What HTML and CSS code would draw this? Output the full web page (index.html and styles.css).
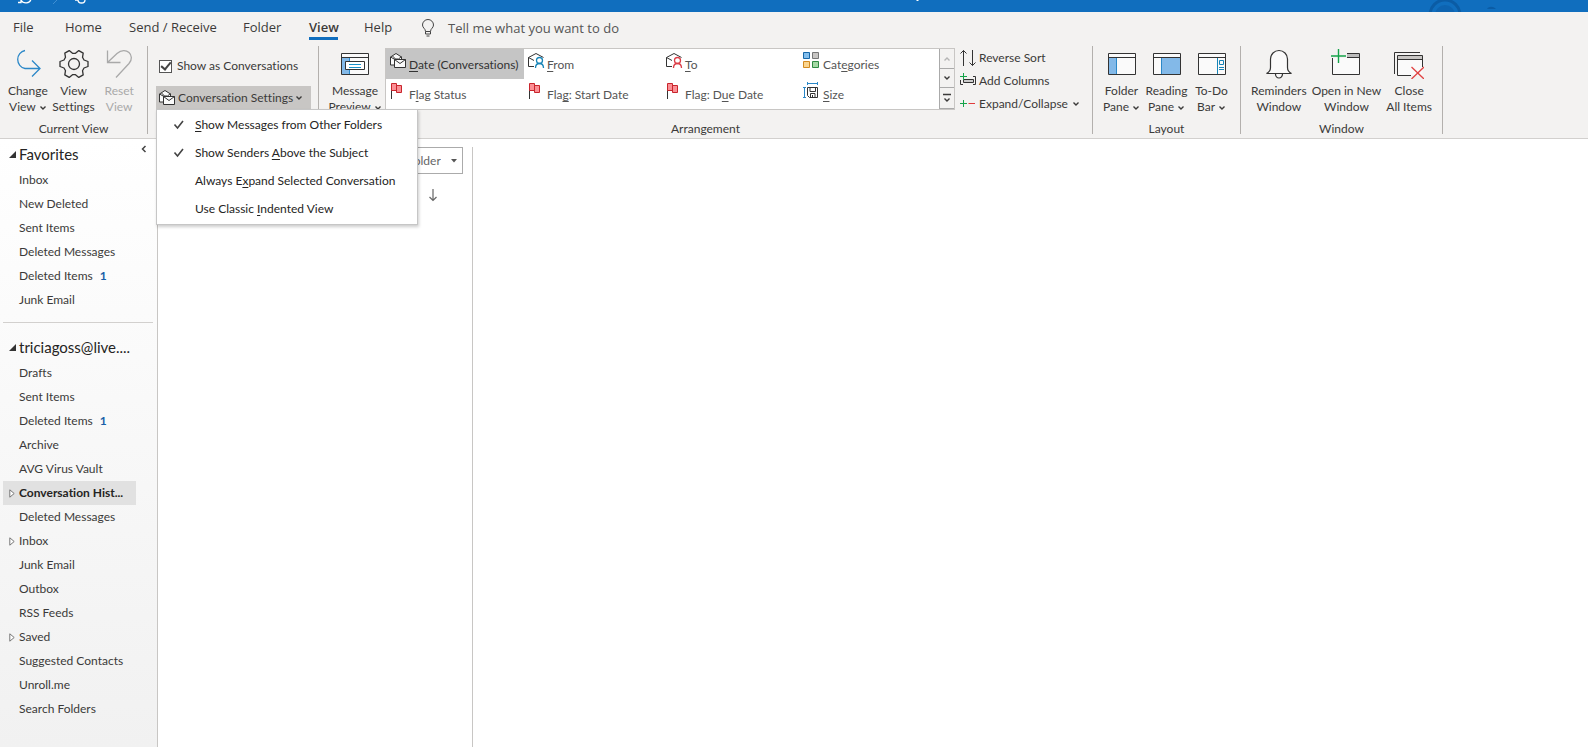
FILE: index.html
```
<!DOCTYPE html>
<html lang="en">
<head>
<meta charset="utf-8">
<title>Mail – View</title>
<link rel="stylesheet" href="styles.css">
</head>
<body>
<svg class="defs" aria-hidden="true">
  <symbol id="chev" viewBox="0 0 8 8"><path d="M1.500 2.500 4 5l2.500-2.500" fill="none" stroke="currentColor" stroke-width="1.400"/></symbol>
  <symbol id="mails" viewBox="0 0 18 18">
    <path d="M5 13H1.500V5L7 1.500 12.500 5v2" fill="#fafafa" stroke="#333"/>
    <path d="M1.500 5 6 7.500M3.500 4l3 3h3l3-2.500" fill="none" stroke="#333"/>
    <path d="M5.500 7.500h11v8h-11z" fill="#fafafa" stroke="#333"/><path d="m5.500 7.500 5.500 4 5.500-4" fill="none" stroke="#333"/>
  </symbol>
  <symbol id="person-mail" viewBox="0 0 18 18">
    <path d="M7 14.500H1.500V5.500L9 1.500l7.500 4M1.500 5.500 7 8.500" fill="none" stroke="#333"/>
    <circle cx="12.500" cy="8.500" r="3" fill="#fff" stroke="currentColor" stroke-width="1.300"/><path d="M8.500 16c0-6 8-6 8 0" fill="none" stroke="currentColor" stroke-width="1.300"/>
  </symbol>
  <symbol id="flag" viewBox="0 0 18 18">
    <path d="M2.500 2v15" stroke="#333"/><path d="M2.500 1.500h5v7h-5z" fill="#fb8f95" stroke="#c8252c"/><path d="M7.500 3.500h5v7h-5z" fill="#fb8f95" stroke="#c8252c"/>
  </symbol>
</svg>

<header class="titlebar">
  <svg class="quick" width="90" height="12" viewBox="0 0 90 12" fill="none" stroke="#fff" aria-hidden="true"><path d="M18 2.500h3V0M21 0c2 4 9 4 10-1" stroke-width="1.300"/><path d="m53 4 4-4" stroke="#3f8fd3"/><path d="M75 0h3M78 0c0 4 7 4 7 0" stroke-width="1.300"/></svg>
  <svg class="mark" width="4" height="12" viewBox="0 0 4 12" aria-hidden="true"><path d="M0 0h3l-1 1H1z" fill="#fff"/></svg>
  <svg class="art" width="72" height="12" viewBox="0 0 72 12" fill="none" aria-hidden="true"><circle cx="17" cy="15" r="15" stroke="#0b5ca5" stroke-width="3"/><circle cx="17" cy="15" r="10" fill="#0d63b0"/><path d="M59 9c2-3 6-3 9 0z" fill="#0b5ca5"/></svg>
</header>

<nav class="tabs" aria-label="Ribbon tabs">
  <button class="tab tab-file">File</button>
  <button class="tab tab-home">Home</button>
  <button class="tab tab-send">Send / Receive</button>
  <button class="tab tab-folder">Folder</button>
  <button class="tab tab-view active">View</button>
  <button class="tab tab-help">Help</button>
  <button class="tell">
    <svg width="14" height="18" viewBox="0 0 14 18" fill="none" stroke="#444" aria-hidden="true"><path d="M4.500 12.500c0-3-3-3.500-3-6.500a5.500 5.500 0 0 1 11 0c0 3-3 3.500-3 6.500zM4.500 12.500v2.500h5v-2.500M5.500 17h3"/></svg>
    <span>Tell me what you want to do</span>
  </button>
</nav>

<section class="ribbon" aria-label="View">
  <div class="group current">
    <div class="body">
      <button class="big">
        <svg width="30" height="30" viewBox="0 0 30 30" fill="none" stroke="#2b88c8" stroke-width="1.300" aria-hidden="true"><path d="M12 1.500A9.200 9.200 0 0 0 12 19.500H27M19 11.500l8 8-8 8"/></svg>
        <span>Change<br>View <svg class="chev"><use href="#chev"/></svg></span>
      </button>
      <button class="big">
        <svg width="30" height="30" viewBox="0 0 30 30" fill="none" stroke="#333" stroke-width="1.300" stroke-linejoin="round" aria-hidden="true"><path d="M25 11 29 12.500V17.500L25 19 23.500 21.700 24.200 25.900 19.800 28.400 16.500 25.700H13.500L10.200 28.400 5.800 25.900 6.500 21.700 5 19 1 17.500V12.500L5 11 6.500 8.300 5.800 4.100 10.200 1.600 13.500 4.300H16.500L19.800 1.600 24.200 4.100 23.500 8.300z"/><circle cx="15" cy="15" r="5.500"/></svg>
        <span>View<br>Settings</span>
      </button>
      <button class="big" disabled>
        <svg width="30" height="30" viewBox="0 0 30 30" fill="none" stroke="#a9a9a9" stroke-width="1.300" aria-hidden="true"><path d="M3.500 1.500v12h13M3.500 13.500 13 4.500c9-8 19 2 12 10L12 28.500"/></svg>
        <span>Reset<br>View</span>
      </button>
    </div>
    <h2>Current View</h2>
  </div>

  <div class="group conversations">
    <label class="check"><input type="checkbox" checked><span>Show as Conversations</span></label>
    <div class="dropdown">
      <button class="drop" aria-haspopup="menu" aria-expanded="true"><svg width="18" height="18" aria-hidden="true"><use href="#mails"/></svg><span>Conversation Settings</span><svg class="chev"><use href="#chev"/></svg></button>
      <div class="menu" role="menu">
        <button role="menuitemcheckbox" aria-checked="true"><svg width="12" height="10" viewBox="0 0 12 10" aria-hidden="true"><path d="m1.500 4.500 3 3.500 5.500-7" fill="none" stroke="#444" stroke-width="1.600"/></svg><span><u>S</u>how Messages from Other Folders</span></button>
        <button role="menuitemcheckbox" aria-checked="true"><svg width="12" height="10" viewBox="0 0 12 10" aria-hidden="true"><path d="m1.500 4.500 3 3.500 5.500-7" fill="none" stroke="#444" stroke-width="1.600"/></svg><span>Show Senders <u>A</u>bove the Subject</span></button>
        <button role="menuitemcheckbox" aria-checked="false"><i></i><span>Always E<u>x</u>pand Selected Conversation</span></button>
        <button role="menuitemcheckbox" aria-checked="false"><i></i><span>Use Classic <u>I</u>ndented View</span></button>
      </div>
    </div>
  </div>

  <div class="group arrangement">
    <div class="body">
      <button class="big">
        <svg width="30" height="30" viewBox="0 0 30 30" fill="none" aria-hidden="true"><path d="M1.500 4.500h27v21h-27z" fill="#fafafa" stroke="#333"/><path d="M2 8.500h7v16.500H2z" fill="#83b9e8"/><path d="M1.500 8.500h27" stroke="#333"/><path d="M9.500 9v16" stroke="#2b88c8"/><path d="M5.500 12.500h19v8h-19z" fill="#fff" stroke="#333"/><path d="M9 15.500h12M9 18.500h12" stroke="#1790c8"/></svg>
        <span>Message<br>Preview <svg class="chev"><use href="#chev"/></svg></span>
      </button>
      <div class="gallery">
        <div class="options">
          <button class="selected"><svg width="18" height="18"><use href="#mails"/></svg><span><u>D</u>ate (Conversations)</span></button>
          <button><svg class="blue" width="18" height="18"><use href="#person-mail"/></svg><span><u>F</u>rom</span></button>
          <button><svg class="red" width="18" height="18"><use href="#person-mail"/></svg><span><u>T</u>o</span></button>
          <button><svg width="18" height="18" viewBox="0 0 18 18"><path d="M.500.500h6v6h-6z" fill="#83beec" stroke="#1767a8"/><path d="M9.500.500h6v6h-6z" fill="#c8c6c4" stroke="#777"/><path d="M.500 9.500h6v6h-6z" fill="#fbd58e" stroke="#d38a20"/><path d="M9.500 9.500h6v6h-6z" fill="#a5d9a5" stroke="#2f8a43"/></svg><span>Cat<u>e</u>gories</span></button>
          <button><svg width="18" height="18"><use href="#flag"/></svg><span>F<u>l</u>ag Status</span></button>
          <button><svg width="18" height="18"><use href="#flag"/></svg><span>Fla<u>g</u>: Start Date</span></button>
          <button><svg width="18" height="18"><use href="#flag"/></svg><span>Flag: D<u>u</u>e Date</span></button>
          <button><svg width="18" height="18" viewBox="0 0 18 18" fill="none"><path d="M4.500 1.500h10M4.500 0v3M14.500 0v3M1.500 5.500v10M0 5.500h3M0 15.500h3" stroke="#2b88c8"/><path d="M4.500 5.500h10v10h-8l-2-2z" fill="#fff" stroke="#333"/><path d="M7 5.500v4h5.500v-4M7.500 15v-3.500h4.500V15M9.500 13v2" stroke="#333"/></svg><span><u>S</u>ize</span></button>
        </div>
        <div class="scroller">
          <button disabled aria-label="Previous row"><svg class="chev flip"><use href="#chev"/></svg></button>
          <button aria-label="Next row"><svg class="chev"><use href="#chev"/></svg></button>
          <button aria-label="More"><svg width="8" height="10" viewBox="0 0 8 10" fill="none" stroke="currentColor" stroke-width="1.400"><path d="M0 1.500h8M1.500 5.500 4 8l2.500-2.500"/></svg></button>
        </div>
      </div>
      <div class="commands">
        <button><svg width="18" height="18" viewBox="0 0 18 18" fill="none" stroke="#333"><path d="M4.500 17V1.500M1.500 4.500l3-3 3 3M13.500 1v15.500M10.500 13.500l3 3 3-3"/></svg><span>Reverse Sort</span></button>
        <button><svg width="18" height="18" viewBox="0 0 18 18" fill="none"><path d="M4 12.500H1.500V8M14 4.500h2.500v8H14" stroke="#333"/><path d="M4.500 7.500h10v3h-10z" fill="#ccc" stroke="#333"/><path d="M4.500 1v7M1 4.500h7" stroke="#14a34a"/></svg><span>Add Columns</span></button>
        <button><svg width="18" height="18" viewBox="0 0 18 18" fill="none"><path d="M4.500 5v7M1 8.500h7" stroke="#14a34a"/><path d="M9.500 8.500H16" stroke="#e03c3c"/></svg><span>Expand/Collapse</span><svg class="chev"><use href="#chev"/></svg></button>
      </div>
    </div>
    <h2>Arrangement</h2>
  </div>

  <div class="group layout">
    <div class="body">
      <button class="big">
        <svg width="30" height="30" viewBox="0 0 30 30" fill="none" aria-hidden="true"><path d="M1.500 4.500h27v21h-27z" fill="#fafafa" stroke="#333"/><path d="M2 9h7v16H2z" fill="#83b9e8"/><path d="M1.500 8.500h27" stroke="#333"/><path d="M9.500 9v16" stroke="#2b88c8"/></svg>
        <span>Folder<br>Pane <svg class="chev"><use href="#chev"/></svg></span>
      </button>
      <button class="big">
        <svg width="30" height="30" viewBox="0 0 30 30" fill="none" aria-hidden="true"><path d="M1.500 4.500h27v21h-27z" fill="#fafafa" stroke="#333"/><path d="M10 9h18v16H10z" fill="#83b9e8"/><path d="M1.500 8.500h27" stroke="#333"/><path d="M9.500 9v16" stroke="#2b88c8"/></svg>
        <span>Reading<br>Pane <svg class="chev"><use href="#chev"/></svg></span>
      </button>
      <button class="big">
        <svg width="30" height="30" viewBox="0 0 30 30" fill="none" aria-hidden="true"><path d="M1.500 4.500h27v21h-27z" fill="#fafafa" stroke="#333"/><path d="M1.500 8.500h27" stroke="#333"/><path d="M20.500 9v16M22.500 11.500h4v4h-4zM22 18.500h5M22 20.500h5" stroke="#1785b8"/></svg>
        <span>To-Do<br>Bar <svg class="chev"><use href="#chev"/></svg></span>
      </button>
    </div>
    <h2>Layout</h2>
  </div>

  <div class="group window">
    <div class="body">
      <button class="big">
        <svg width="30" height="30" viewBox="0 0 30 30" fill="#fafafa" stroke="#333" stroke-width="1.200" aria-hidden="true"><path d="M11.500 25a3.500 4 0 0 0 7 0"/><path d="M2.500 24.500c3-1.500 4-3 4-6V10a8.500 8.500 0 0 1 17 0v8.500c0 3 1 4.500 4 6z"/></svg>
        <span>Reminders<br>Window</span>
      </button>
      <button class="big wide">
        <svg width="30" height="30" viewBox="0 0 30 30" fill="none" aria-hidden="true"><path d="M2 9h26v16H2z" fill="#fafafa"/><path d="M16 4.500h12.500v4H16z" fill="#bbb"/><path d="M1.500 9v16.500h27v-21H16M16 8.500h12.500" stroke="#333"/><path d="M7.500 0v14M0 7h15" stroke="#14a34a" stroke-width="1.400"/></svg>
        <span>Open in New<br>Window</span>
      </button>
      <button class="big">
        <svg width="30" height="30" viewBox="0 0 30 30" fill="none" aria-hidden="true"><path d="M26 3.500H.500V25" stroke="#333"/><path d="M3.500 6.500h25v20h-25z" fill="#fafafa"/><path d="M3.500 6.500h25v4h-25z" fill="#c8c6c4"/><path d="M28.500 18V6.500h-25v20H17M3.500 10.500h25" stroke="#333"/><path d="m17.500 18 12.500 12M30 18 17.500 30" stroke="#e04343" stroke-width="1.300"/></svg>
        <span>Close<br>All Items</span>
      </button>
    </div>
    <h2>Window</h2>
  </div>
</section>

<main class="workspace">
  <aside class="folders">
    <button class="collapse" aria-label="Minimize the folder pane"><svg width="6" height="8" viewBox="0 0 6 8"><path d="M4.500 1 1.500 4l3 3" fill="none" stroke="#444" stroke-width="1.500"/></svg></button>
    <section>
      <h3><svg width="7" height="7" viewBox="0 0 7 7"><path d="M7 0v7H0z" fill="#333"/></svg>Favorites</h3>
      <ul>
        <li><a href="#">Inbox</a></li>
        <li><a href="#">New Deleted</a></li>
        <li><a href="#">Sent Items</a></li>
        <li><a href="#">Deleted Messages</a></li>
        <li><a href="#">Deleted Items <b>1</b></a></li>
        <li><a href="#">Junk Email</a></li>
      </ul>
    </section>
    <section class="account">
      <h3><svg width="7" height="7" viewBox="0 0 7 7"><path d="M7 0v7H0z" fill="#333"/></svg>triciagoss@live....</h3>
      <ul>
        <li><a href="#">Drafts</a></li>
        <li><a href="#">Sent Items</a></li>
        <li><a href="#">Deleted Items <b>1</b></a></li>
        <li><a href="#">Archive</a></li>
        <li><a href="#">AVG Virus Vault</a></li>
        <li class="parent chosen"><a href="#"><svg width="6" height="9" viewBox="0 0 6 9"><path d="M.800.800v7.400l4.400-3.700z" fill="#fff" stroke="#777"/></svg>Conversation Hist...</a></li>
        <li><a href="#">Deleted Messages</a></li>
        <li class="parent"><a href="#"><svg width="6" height="9" viewBox="0 0 6 9"><path d="M.800.800v7.400l4.400-3.700z" fill="#fff" stroke="#777"/></svg>Inbox</a></li>
        <li><a href="#">Junk Email</a></li>
        <li><a href="#">Outbox</a></li>
        <li><a href="#">RSS Feeds</a></li>
        <li class="parent"><a href="#"><svg width="6" height="9" viewBox="0 0 6 9"><path d="M.800.800v7.400l4.400-3.700z" fill="#fff" stroke="#777"/></svg>Saved</a></li>
        <li><a href="#">Suggested Contacts</a></li>
        <li><a href="#">Unroll.me</a></li>
        <li><a href="#">Search Folders</a></li>
      </ul>
    </section>
  </aside>
  <section class="list" aria-label="Messages">
    <div class="scope">
      <select aria-label="Search scope"><option>Current Folder</option></select>
      <svg width="6" height="4" viewBox="0 0 6 4" aria-hidden="true"><path d="M0 0h6L3 3.500z" fill="#555"/></svg>
    </div>
    <button class="order" aria-label="Sort order"><svg width="10" height="14" viewBox="0 0 10 14"><path d="M5 1v11.500M1.500 9 5 12.500 8.500 9" fill="none" stroke="#666" stroke-width="1.200"/></svg></button>
  </section>
  <section class="reading" aria-label="Reading pane"></section>
</main>
</body>
</html>
```
FILE: styles.css
```
* { box-sizing: border-box; }
html, body { height: 100%; }
body {
  margin: 0;
  display: flex;
  flex-direction: column;
  overflow: hidden;
  background: #fff;
  color: #3b3a39;
  font: 12px/16px Lato, "Open Sans", sans-serif;
  font-variant-ligatures: none;
}
button, select, input { font: inherit; color: inherit; font-variant-ligatures: none; }
button { border: 0; margin: 0; padding: 0; background: none; white-space: nowrap; }
svg { flex: none; display: block; }
u { text-decoration: underline; text-underline-offset: 2px; text-decoration-skip-ink: none; }
h2, h3, ul { margin: 0; padding: 0; font-weight: 400; }
.defs { position: absolute; width: 0; height: 0; }
.chev { width: 8px; height: 8px; display: inline-block; vertical-align: middle; }
.flip { transform: rotate(180deg); }

.titlebar {
  flex: none;
  height: 12px;
  display: flex;
  justify-content: space-between;
  background: #106ebe;
}
.mark { margin-left: auto; margin-right: 508px; }
.art { margin-right: 88px; }

.tabs {
  flex: none;
  display: flex;
  height: 32px;
  padding-left: 13px;
  background: #f3f2f1;
  font-family: "Open Sans", sans-serif;
  font-size: 13px;
}
.tab { height: 28px; padding-top: 5px; border-bottom: 3px solid transparent; text-align: left; }
.tab-file { width: 52px; }
.tab-home { width: 64px; }
.tab-send { width: 114px; }
.tab-folder { width: 66px; }
.tab-view { width: 29px; margin-right: 26px; }
.tab-help { width: 57px; }
.active { border-color: #106ebe; font-weight: 600; }
.tell { display: flex; align-items: center; gap: 13px; height: 31px; color: #555; }

.ribbon {
  flex: none;
  display: flex;
  height: 95px;
  padding: 2px 0 4px;
  background: #f3f2f1;
  border-bottom: 1px solid #d2d0ce;
}
.group {
  display: flex;
  flex-direction: column;
  justify-content: space-between;
  border-right: 1px solid #b3b0ad;
}
.group h2 { font-size: 12px; line-height: 10px; text-align: center; }
.body { display: flex; }
.big {
  display: flex;
  flex-direction: column;
  align-items: center;
  gap: 4px;
  width: 46px;
  padding-top: 3px;
}
.big span { text-align: center; }
.big:disabled { color: #a9a9a9; }
.current { width: 148px; padding: 0 5px; }
.conversations { width: 171px; padding-left: 8px; justify-content: flex-start; }
.check { display: flex; align-items: center; gap: 5px; margin: 12px 0 12px 3px; }
.check input {
  appearance: none;
  width: 13px;
  height: 13px;
  margin: 0;
  border: 1px solid #555;
  background: #fff;
  display: grid;
  place-items: center;
}
.check input::after { content: ""; width: 4px; height: 8px; margin-top: -3px; border: solid #444; border-width: 0 2px 2px 0; transform: rotate(40deg); }
.dropdown { position: relative; width: 155px; }
.drop { display: flex; align-items: center; gap: 2px; width: 100%; height: 23px; padding-left: 2px; background: #c8c6c4; }
.menu {
  position: absolute;
  z-index: 2;
  top: 100%;
  left: 0;
  width: 262px;
  padding: 1px 0;
  background: #fff;
  border: 1px solid #c6c6c6;
  box-shadow: 1px 2px 3px rgba(0, 0, 0, .2);
  color: #252423;
}
.menu button { display: flex; align-items: center; gap: 10px; width: 100%; height: 28px; padding-left: 16px; }
.menu i { width: 12px; }

.arrangement { width: 774px; }
.arrangement .body { padding-left: 10px; }
.arrangement .big { width: 52px; }
.gallery { display: flex; width: 570px; height: 62px; margin: 2px 4px 0 4px; border: 1px solid #c8c6c4; background: #fff; }
.options { flex: 1; display: grid; grid-template-columns: repeat(4, 138px); grid-template-rows: 30px 30px; color: #555; }
.options button { display: flex; align-items: flex-start; gap: 2px; padding: 3px 0 0 3px; }
.options span { padding-top: 5px; }
.options .selected { background: #c5c5c5; color: #333; }
.blue { color: #1785b8; }
.red { color: #dc3e48; }
.scroller { display: grid; grid-template-rows: 20px 19px 21px; width: 15px; }
.scroller button { display: grid; place-items: center; border: solid #aaa; border-width: 0 0 1px 1px; background: #f3f2f1; }
.scroller button:disabled { color: #b5b5b5; }
.commands { display: flex; flex-direction: column; }
.commands button { display: flex; align-items: center; gap: 2px; height: 23px; }
.commands .chev { margin-left: 2px; }
.layout { width: 148px; padding: 0 6px; }
.window { width: 202px; padding: 0 7px; }
.window .big { width: 62px; }
.window .big:last-child { width: 52px; }
.window .wide { width: 74px; }

.workspace { flex: 1; display: flex; min-height: 0; }
.folders {
  position: relative;
  width: 158px;
  padding: 5px 4px 0 3px;
  border-right: 1px solid #c8c6c4;
  background: linear-gradient(#fff, #f1f1f1);
}
.collapse { position: absolute; top: 6px; right: 10px; }
.folders h3 { display: flex; align-items: center; gap: 3px; height: 20px; padding-left: 6px; margin-bottom: 4px; font-size: 15px; line-height: 20px; color: #252423; }
.folders ul { list-style: none; }
.folders section:first-of-type ul { padding-bottom: 10px; border-bottom: 1px solid #d2d0ce; }
.folders li { width: 133px; height: 24px; }
.folders a { display: flex; align-items: center; height: 24px; padding-left: 16px; color: inherit; text-decoration: none; white-space: nowrap; }
.folders b { margin-left: 7px; color: #1a5fa8; }
.account { padding-top: 14px; }
.parent a { padding-left: 6px; gap: 4px; }
.chosen { background: #e1e1e1; color: #252423; font-weight: 700; }

.list { display: flex; flex-direction: column; align-items: flex-end; gap: 14px; width: 315px; margin-top: 8px; padding-right: 9px; border-right: 1px solid #c8c6c4; }
.scope { display: flex; align-items: center; gap: 10px; height: 27px; padding: 0 5px 0 8px; border: 1px solid #ababab; }
.scope select { appearance: none; border: 0; padding: 0; background: none; color: #666; }
.order { margin-right: 25px; }
.reading { flex: 1; }
```
